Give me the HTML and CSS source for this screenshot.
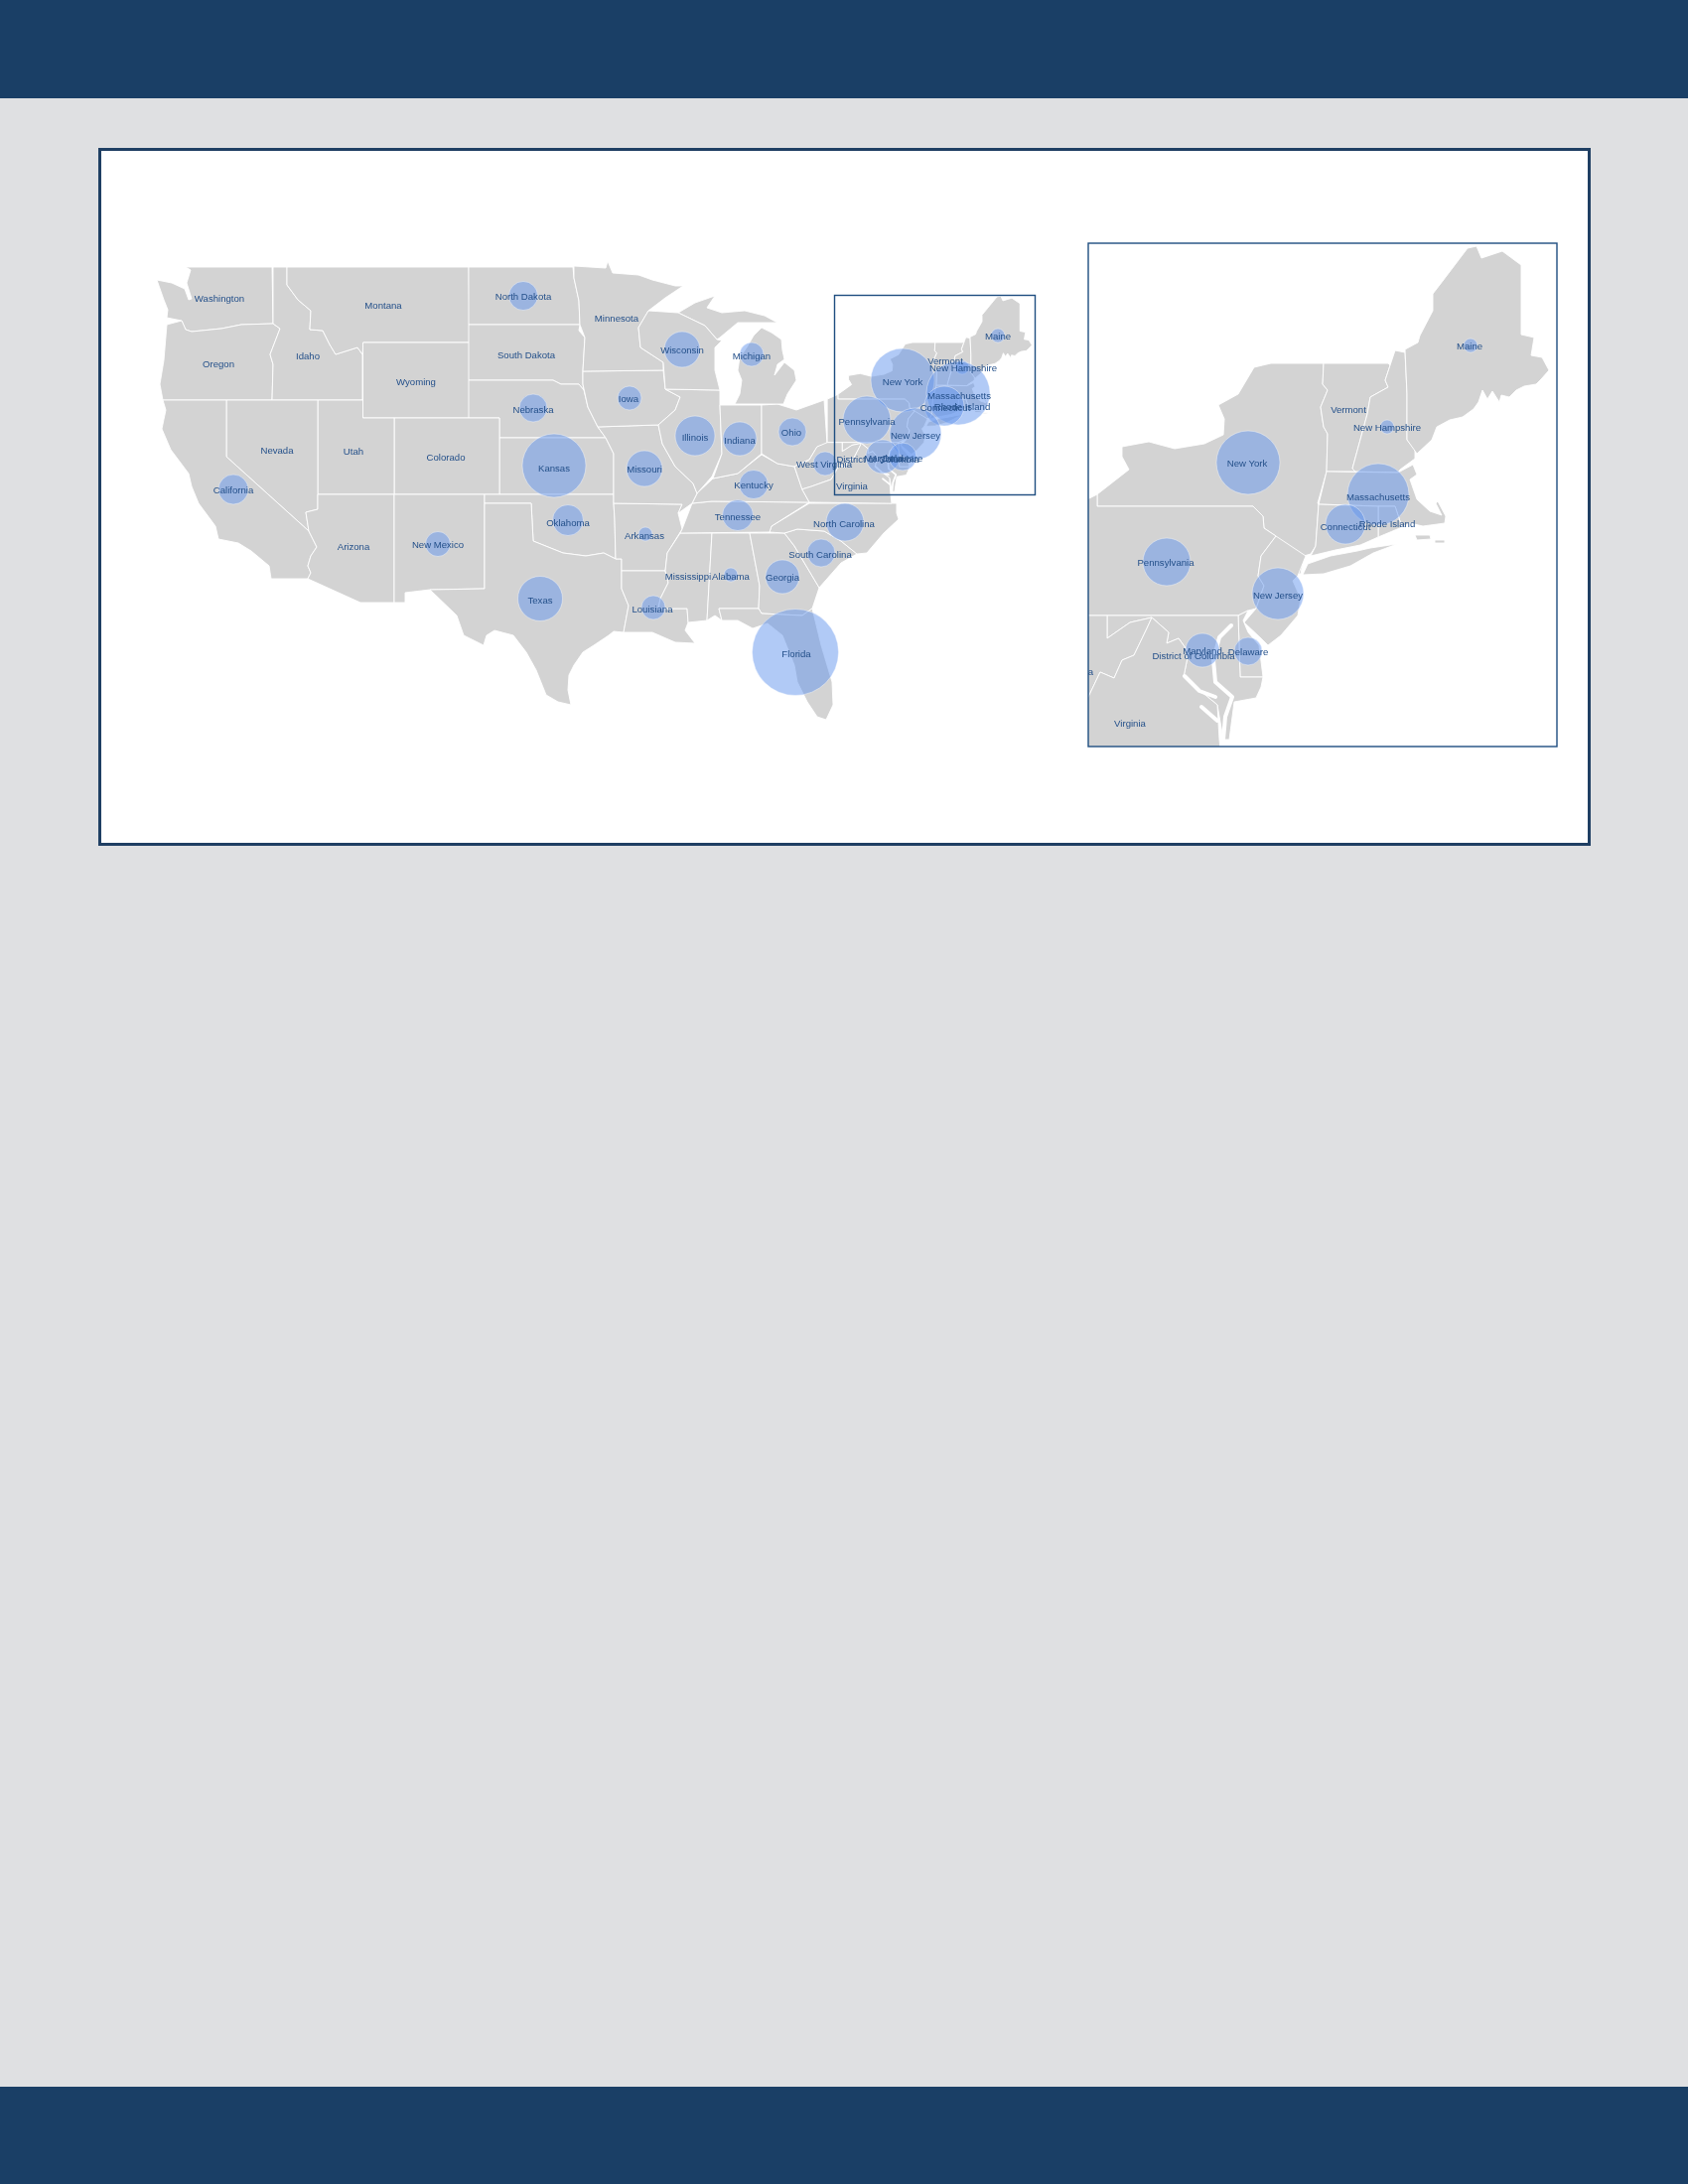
FILE: index.html
```html
<!DOCTYPE html>
<html lang="en">
<head>
<meta charset="utf-8">
<title>US map</title>
<link rel="stylesheet" href="styles.css">
</head>
<body>
<header class="top-bar"></header>
<main class="content">
<section class="card">
<svg class="map" viewBox="102 152 1497 697" xmlns="http://www.w3.org/2000/svg">
<defs>
<clipPath id="inset-clip"><rect x="1096" y="245" width="472" height="507"/></clipPath>
<g id="ne">
<polygon class="st" points="1105,498 1137,473 1130,460 1130,450 1157,445 1183,452 1213,447 1232,438 1233,422 1227,408 1247,397 1263,370 1280,366 1333,366 1332,387 1337,393 1330,410 1333,430 1337,437 1336,475 1327,507 1328,508 1325,550 1320,558 1313,560 1310,578 1303,578 1285,540 1273,532 1272,520 1262,510 1105,510"/>
<polygon class="st" points="1312,579 1333,578 1360,570 1383,557 1407,548 1380,552 1367,555 1340,560 1317,568"/>
<polygon class="st" points="1333,366 1398,366 1400,368 1395,383 1398,390 1380,400 1377,417 1368,450 1362,472 1365,475 1336,475 1337,437 1333,430 1330,410 1337,393 1332,387"/>
<polygon class="st" points="1405,353 1415,355 1417,397 1417,443 1425,453 1425,462 1410,473 1408,476 1365,475 1362,472 1368,450 1377,417 1380,400 1398,390 1395,383 1400,368"/>
<polygon class="st" points="1415,352 1428,345 1430,338 1443,313 1443,296 1453,283 1478,250 1487,248 1492,260 1513,253 1532,267 1532,337 1545,340 1542,358 1553,360 1560,373 1552,382 1547,387 1535,389 1527,393 1520,400 1512,398 1510,405 1503,394 1498,402 1493,393 1489,405 1484,412 1473,420 1460,423 1447,430 1442,443 1427,457 1417,443 1417,397"/>
<polygon class="st" points="1336,475 1408,476 1423,468 1427,478 1420,483 1427,503 1440,515 1452,519 1446,507 1448,505 1456,520 1455,527 1433,530 1420,527 1412,531 1405,510 1388,510 1328,508"/>
<polygon class="st" points="1388,510 1405,510 1412,531 1388,541"/>
<polygon class="st" points="1328,508 1388,510 1388,541 1370,549 1345,554 1320,560 1325,550"/>
<polygon class="st" points="1080,510 1097,502 1105,498 1105,510 1262,510 1272,520 1273,532 1285,540 1270,560 1267,580 1273,590 1265,613 1257,615 1247,620 1080,620"/>
<polygon class="st" points="1285,540 1315,560 1307,580 1302,585 1310,603 1307,620 1290,640 1277,650 1270,643 1253,627 1265,613 1273,590 1267,580 1270,560"/>
<polygon class="st" points="1247,620 1257,615 1252,625 1257,637 1268,650 1272,682 1249,682"/>
<polygon class="st" points="1115,620 1247,620 1249,682 1272,682 1270,692 1265,703 1243,707 1238,745 1232,745 1226,710 1192,682 1197,657 1187,643 1175,648 1177,637 1160,622 1138,627 1115,643"/>
<polygon class="st" points="1080,620 1115,620 1115,643 1138,627 1160,622 1155,633 1142,660 1130,665 1122,683 1108,677 1097,700 1089,714 1042,732 1021,739 1003,681 1038,664 1056,631"/>
<polygon class="st" points="1097,700 1108,677 1122,683 1130,665 1142,660 1155,633 1160,622 1177,637 1175,648 1187,643 1197,657 1192,682 1226,710 1228,745 1231,775 1038,772 1021,739 1042,732 1089,714"/>
<polygon class="st" points="1425,539 1440,539 1441,543 1427,544"/>
<polygon class="st" points="1445,544 1455,544 1455,547 1445,547"/>
<path class="bay" d="M1240,630 L1228,642 L1222,665 L1224,687 L1241,702 L1234,722 L1232,745 L1236,760 M1193,681 L1208,696 L1224,702 M1210,712 L1226,726"/>
</g>
</defs>

<!-- contiguous states, main map -->
<g class="states">
<polygon class="st" points="187,269 274,269 275,326 243,327 223,331 193,334 187,332 183,323 168,320 169,312 165,302 158,282 173,285 186,291 190,302 193,301 188,285 192,272"/>
<polygon class="st" points="168,327 183,323 187,332 193,334 223,331 243,327 275,326 282,331 272,357 275,367 274,403 164,403 161,387 165,363"/>
<polygon class="st" points="275,269 289,269 289,287 300,302 313,313 312,332 325,333 332,347 338,357 360,350 365,357 365,403 274,403 275,367 272,357 282,331 275,326"/>
<polygon class="st" points="289,269 472,269 473,345 366,345 365,357 360,350 338,357 332,347 325,333 312,332 313,313 300,302 289,287"/>
<rect class="st" x="365.5" y="345" width="107" height="76"/>
<polygon class="st" points="472,269 577,269 578,280 583,303 584,327 472,327"/>
<polygon class="st" points="472,327 584,327 583,333 589,340 587,373 587,387 588,393 583,387 565,387 557,383 472,383"/>
<polygon class="st" points="472,383 557,383 565,387 583,387 588,393 592,410 602,430 610,441 503,441 503,421 472,421"/>
<polygon class="st" points="503,441 610,441 618,457 618,498 503,498"/>
<rect class="st" x="397" y="421" width="106" height="77"/>
<polygon class="st" points="320,403 365.5,403 365.5,421 397,421 397,498 320,498"/>
<polygon class="st" points="228,403 320,403 320,513 308,516 311,535 228,460"/>
<polygon class="st" points="164,403 228,403 228,460 311,535 319,551 313,560 310,570 313,577 310,583 273,583 271,570 253,555 240,547 220,543 217,530 200,507 193,490 190,477 172,453 163,432 167,413"/>
<polygon class="st" points="320,498 397,498 397,607 363,607 310,583 313,577 310,570 313,560 319,551 311,535 308,516 320,513"/>
<polygon class="st" points="397,498 488,498 488,593 433,594 408,597 408,607 397,607"/>
<polygon class="st" points="488,498 618,498 618,507 619,523 620,563 608,557 590,560 567,557 537,545 535,507 488,507"/>
<polygon class="st" points="488,507 535,507 537,545 567,557 590,560 608,557 620,563 626,563 626,593 633,610 628,637 618,636 613,640 598,650 587,657 578,670 573,680 572,695 575,710 562,707 550,700 540,675 530,657 517,640 498,635 490,640 487,650 467,640 460,620 433,594 488,593"/>
<polygon class="st" points="618,507 687,508 683,517 687,533 672,557 670,575 626,575 626,563 620,563 619,523"/>
<polygon class="st" points="626,575 670,575 673,587 665,603 663,613 692,613 693,627 690,635 700,648 680,647 657,637 637,637 628,637 633,610 626,593"/>
<polygon class="st" points="685,537 717,537 712,625 693,627 692,613 663,613 665,603 673,587 670,575 672,557"/>
<polygon class="st" points="717,537 755,537 765,590 764,613 724,613 727,625 720,620 712,625"/>
<polygon class="st" points="755,537 790,537 800,550 825,592 818,613 808,620 767,618 764,613 765,590"/>
<polygon class="st" points="724,613 764,613 767,618 808,620 818,613 827,650 838,687 839,710 832,725 823,722 813,707 803,687 800,670 788,640 773,628 758,633 743,625 727,625"/>
<polygon class="st" points="790,537 803,533 830,535 847,545 863,558 847,567 825,592 800,550"/>
<polygon class="st" points="775,536 777,530 815,507 903,507 903,517 905,523 890,537 873,557 863,558 847,545 830,535 803,533 790,537"/>
<polygon class="st" points="697,507 717,505 815,506 777,530 775,536 685,537 687,533"/>
<polygon class="st" points="702,497 718,482 743,477 767,458 783,467 800,470 808,493 815,506 717,505 697,507"/>
<polygon class="st" points="602,430 663,428 667,447 680,470 698,487 702,497 697,507 683,517 687,508 618,507 618,457 610,441"/>
<polygon class="st" points="587,374 668,373 670,392 685,400 680,413 663,428 602,430 592,410 587,387"/>
<polygon class="st" points="670,392 725,393 725,408 727,457 717,480 702,497 698,487 680,470 667,447 663,428 680,413 685,400"/>
<polygon class="st" points="725,408 767,408 767,457 743,477 718,482 727,457"/>
<polygon class="st" points="767,408 783,407 802,413 830,403 833,447 823,450 815,463 800,470 783,467 767,457"/>
<polygon class="st" points="740,407 745,397 747,383 743,373 745,360 752,350 759,338 767,330 777,335 787,342 788,353 790,362 783,367 780,378 790,365 800,373 802,383 793,397 789,407"/>
<polygon class="st" points="683,315 700,305 720,298 712,310 727,315 750,313 770,318 783,325 770,325 743,325 725,340 722,342 710,328"/>
<polygon class="st" points="578,268 610,270 612,263 617,275 643,277 657,282 680,288 688,288 670,300 653,313 643,330 645,350 668,365 668,373 587,374 589,340 584,327 583,303 578,280"/>
<polygon class="st" points="653,313 683,315 710,328 722,342 727,343 720,350 720,373 725,393 670,392 668,365 645,350 643,330"/>
</g>
<g transform="translate(840 297) scale(.4294 .3965) translate(-1096 -245)"><use href="#ne"/></g>

<g class="bubbles">
<circle cx="527" cy="298" r="14.5"/><circle cx="537" cy="411" r="14"/><circle cx="558" cy="469" r="32"/><circle cx="235" cy="493" r="15"/><circle cx="441" cy="548" r="12.5"/><circle cx="572" cy="524" r="15.5"/><circle cx="544" cy="603" r="22.5"/><circle cx="687" cy="352" r="18"/><circle cx="757" cy="357" r="12"/><circle cx="634" cy="401" r="12"/><circle cx="700" cy="439" r="20"/><circle cx="745" cy="442" r="17"/><circle cx="798" cy="435" r="14"/><circle cx="649" cy="472" r="18"/><circle cx="759" cy="488" r="14.5"/><circle cx="831" cy="467" r="12"/><circle cx="743" cy="519" r="15.5"/><circle cx="851" cy="526" r="19"/><circle cx="827" cy="557" r="14"/><circle cx="788" cy="581" r="17"/><circle cx="736" cy="579" r="7"/><circle cx="650" cy="538" r="7"/><circle cx="658" cy="612" r="12"/><circle cx="801" cy="657" r="43.5"/><circle cx="909" cy="383" r="32"/><circle cx="1005" cy="338" r="7"/><circle cx="969" cy="370" r="7"/><circle cx="965" cy="396" r="32"/><circle cx="951" cy="409" r="20"/><circle cx="922" cy="437" r="26"/><circle cx="873" cy="423" r="24"/><circle cx="889" cy="460" r="17"/><circle cx="909" cy="460" r="14"/>
</g>

<g class="labels">
<text x="221" y="304">Washington</text><text x="386" y="311">Montana</text><text x="527" y="302">North Dakota</text><text x="310" y="362">Idaho</text><text x="220" y="370">Oregon</text><text x="530" y="361">South Dakota</text><text x="419" y="388">Wyoming</text><text x="537" y="416">Nebraska</text><text x="279" y="457">Nevada</text><text x="356" y="458">Utah</text><text x="449" y="464">Colorado</text><text x="558" y="475">Kansas</text><text x="235" y="497">California</text><text x="356" y="554">Arizona</text><text x="441" y="552">New Mexico</text><text x="572" y="530">Oklahoma</text><text x="544" y="608">Texas</text><text x="621" y="324">Minnesota</text><text x="687" y="356">Wisconsin</text><text x="757" y="362">Michigan</text><text x="633" y="405">Iowa</text><text x="700" y="444">Illinois</text><text x="745" y="447">Indiana</text><text x="797" y="439">Ohio</text><text x="649" y="476">Missouri</text><text x="759" y="492">Kentucky</text><text x="830" y="471">West Virginia</text><text x="858" y="493">Virginia</text><text x="884" y="466">District of Columbia</text><text x="890" y="465">Maryland</text><text x="909" y="465">Delaware</text><text x="922" y="442">New Jersey</text><text x="873" y="428">Pennsylvania</text><text x="909" y="388">New York</text><text x="952" y="367">Vermont</text><text x="970" y="374">New Hampshire</text><text x="966" y="402">Massachusetts</text><text x="952" y="414">Connecticut</text><text x="969" y="413">Rhode Island</text><text x="1005" y="342">Maine</text><text x="743" y="524">Tennessee</text><text x="850" y="531">North Carolina</text><text x="649" y="543">Arkansas</text><text x="826" y="562">South Carolina</text><text x="693" y="584">Mississippi</text><text x="736" y="584">Alabama</text><text x="788" y="585">Georgia</text><text x="657" y="617">Louisiana</text><text x="802" y="662">Florida</text>
</g>
<rect class="frame" x="840.5" y="297.5" width="202" height="201"/>

<!-- northeast inset -->
<g clip-path="url(#inset-clip)">
<use href="#ne"/>
<g class="bubbles">
<circle cx="1257" cy="466" r="32"/><circle cx="1481" cy="348" r="7"/><circle cx="1397" cy="430" r="7"/><circle cx="1388" cy="498" r="31"/><circle cx="1355" cy="528" r="20"/><circle cx="1287" cy="598" r="26"/><circle cx="1175" cy="566" r="24"/><circle cx="1211" cy="655" r="17"/><circle cx="1257" cy="656" r="14"/>
</g>
<g class="labels">
<text x="1480" y="352">Maine</text><text x="1358" y="416">Vermont</text><text x="1397" y="434">New Hampshire</text><text x="1256" y="470">New York</text><text x="1388" y="504">Massachusetts</text><text x="1397" y="531">Rhode Island</text><text x="1355" y="534">Connecticut</text><text x="1174" y="570">Pennsylvania</text><text x="1287" y="603">New Jersey</text><text x="1211" y="659">Maryland</text><text x="1257" y="660">Delaware</text><text x="1202" y="664">District of Columbia</text><text x="1138" y="732">Virginia</text><text x="1073" y="680">West Virginia</text>
</g>
</g>
<rect class="frame" x="1096" y="245" width="472" height="507"/>
</svg>
</section>
</main>
<footer class="bottom-bar"></footer>
</body>
</html>
```
FILE: styles.css
```css
* { box-sizing: border-box; }
html, body { margin: 0; padding: 0; }
body {
  height: 2200px;
  display: flex;
  flex-direction: column;
  background: #dfe0e2;
  font-family: "Liberation Sans", Arial, sans-serif;
}
.top-bar { height: 99px; background: #1a3f66; }
.content { flex: 1; padding: 50px 98px 0 99px; }
.card {
  width: 1503px;
  height: 703px;
  background: #fff;
  border: 3px solid #1f3f63;
}
.map { display: block; width: 1497px; height: 697px; filter: blur(.45px); }
.bottom-bar { height: 98px; background: #1a3f66; }
.st { fill: #d3d3d3; stroke: #fff; stroke-width: .9; stroke-linejoin: round; vector-effect: non-scaling-stroke; }
.bay { fill: none; stroke: #fff; stroke-width: 4; stroke-linejoin: round; stroke-linecap: round; }
.bubbles circle { fill: #6495ed; fill-opacity: .5; stroke: #fff; stroke-opacity: .4; stroke-width: 1; }
.labels text {
  font-family: "Liberation Sans", Arial, sans-serif;
  font-size: 9.6px;
  fill: #24508a;
  text-anchor: middle;
}
.frame { fill: none; stroke: #1f4e80; stroke-width: 1.4; }
```
